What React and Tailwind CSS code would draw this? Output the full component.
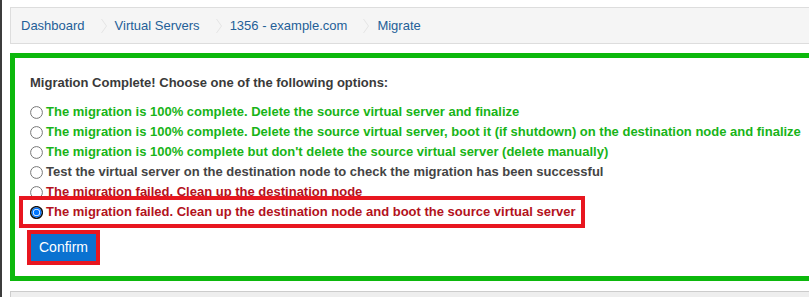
import React from "react";

const crumbs = ["Dashboard", "Virtual Servers", "1356 - example.com", "Migrate"];

const options = [
  { text: "The migration is 100% complete. Delete the source virtual server and finalize", color: "text-[#18b418]" },
  { text: "The migration is 100% complete. Delete the source virtual server, boot it (if shutdown) on the destination node and finalize", color: "text-[#18b418]" },
  { text: "The migration is 100% complete but don't delete the source virtual server (delete manually)", color: "text-[#18b418]" },
  { text: "Test the virtual server on the destination node to check the migration has been successful", color: "text-[#444444]" },
  { text: "The migration failed. Clean up the destination node", color: "text-[#b3121c]" },
  { text: "The migration failed. Clean up the destination node and boot the source virtual server", color: "text-[#b3121c]", checked: true },
];

function Radio({ checked }) {
  if (checked) {
    return (
      <svg width="13" height="13" viewBox="0 0 13 13" className="ml-[5px] mr-[3px] shrink-0">
        <circle cx="6.5" cy="6.5" r="5.8" fill="none" stroke="#111" strokeWidth="1.6" />
        <circle cx="6.5" cy="6.5" r="4.9" fill="#0075ff" />
        <circle cx="6.5" cy="6.5" r="3.6" fill="#fff" />
        <circle cx="6.5" cy="6.5" r="2.8" fill="#0075ff" />
      </svg>
    );
  }
  return (
    <svg width="13" height="13" viewBox="0 0 13 13" className="ml-[5px] mr-[3px] shrink-0">
      <circle cx="6.5" cy="6.5" r="5.9" fill="#fff" stroke="#767676" strokeWidth="1" />
    </svg>
  );
}

function Chevron() {
  return (
    <svg width="6" height="16" viewBox="0 0 6 16" className="ml-[16px] mr-[8px]">
      <path d="M0.5 1 L5.5 8 L0.5 15" fill="none" stroke="#e0e0e0" strokeWidth="0.8" />
    </svg>
  );
}

export default function App() {
  return (
    <div className="flex w-[809px] h-[297px] overflow-hidden bg-white font-['Liberation_Sans',Arial,sans-serif]">
      <div className="w-[2px] shrink-0 bg-[#3c3c3c]" />
      <div className="ml-[8px] w-[830px] shrink-0 pt-[7px]">
        <div className="flex h-[37px] items-center border border-[#dddddd] bg-[#f5f5f5] pl-[10px] text-[13px] text-[#245f98]">
          {crumbs.map((c, i) => (
            <React.Fragment key={c}>
              {i > 0 && <Chevron />}
              <span>{c}</span>
            </React.Fragment>
          ))}
        </div>

        <div className="mt-[9px] border-[5px] border-[#0cb80c] px-[10px] pt-[16px] pb-[15px]">
          <div className="h-[18px] pl-[5px] text-[13px] leading-[18px] font-bold text-[#3a3a3a]">
            Migration Complete! Choose one of the following options:
          </div>
          <div className="mt-[10px]">
            {options.map((o) => (
              <div
                key={o.text}
                className={
                  "flex h-[20px] items-center text-[13px] font-bold whitespace-nowrap " +
                  o.color +
                  (o.checked ? " w-fit pr-[4px] outline-4 outline-offset-2 outline-[#e8161f]" : "")
                }
              >
                <Radio checked={o.checked} />
                <span>{o.text}</span>
              </div>
            ))}
          </div>
          <button className="ml-[6px] mt-[12px] h-[27px] w-[65px] bg-[#0a72d1] text-[14px] text-white outline-4 outline-[#e8161f]">
            Confirm
          </button>
        </div>

        <div className="mt-[10px] h-[40px] border border-[#cccccc] bg-[#eeeeee]" />
      </div>
    </div>
  );
}
